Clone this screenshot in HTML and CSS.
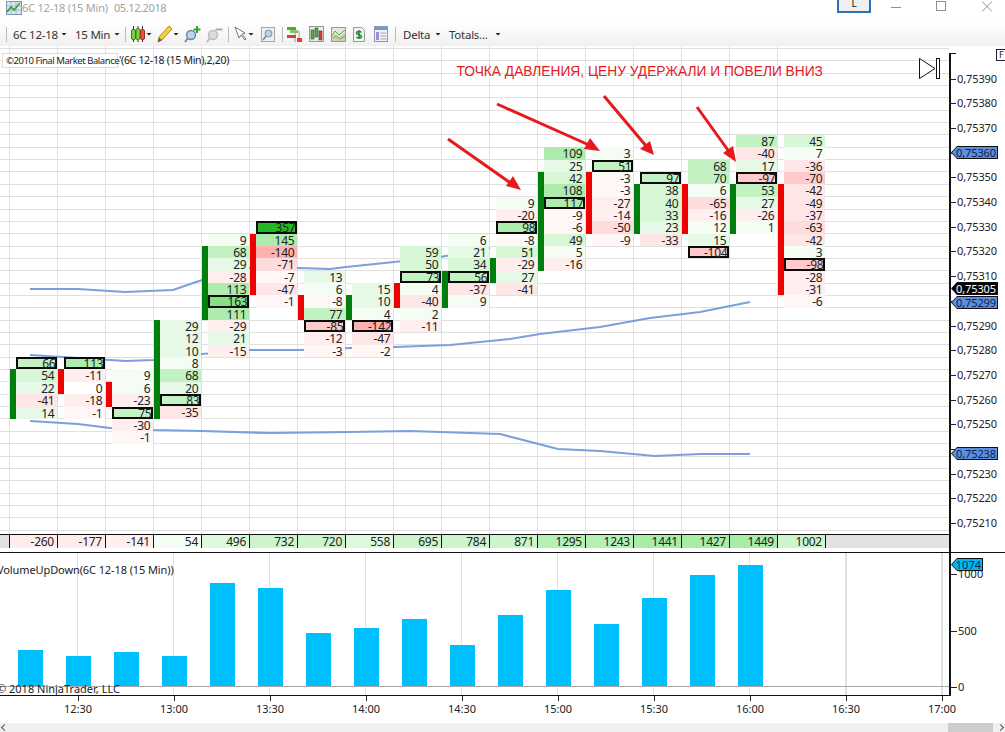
FILE: index.html
```html
<!DOCTYPE html>
<html lang="ru">
<head>
<meta charset="utf-8">
<title>6C 12-18 (15 Min)</title>
<link rel="stylesheet" href="styles.css">
</head>
<body>
<div class="app">
  <header class="titlebar">
    <svg class="app-icon" width="16" height="14" viewBox="0 0 16 14"><rect x=".5" y=".5" width="15" height="13" fill="#dce6f2" stroke="#7f93ad"/><path d="M1 5h14M1 9h14M5 1v12M10 1v12" stroke="#a9bad0"/><path d="M1 11l4-5 3 3 6-7" fill="none" stroke="#2e9e3e" stroke-width="1.6"/></svg>
    <span class="title-text">6C 12-18 (15 Min)</span>
    <span class="title-date">05.12.2018</span>
    <span class="link-btn">L</span>
    <svg class="win win-min" width="10" height="12" viewBox="0 0 10 12"><path d="M0 7.5h10" stroke="#8f8f8f"/></svg>
    <svg class="win win-max" width="10" height="12" viewBox="0 0 10 12"><rect x=".5" y="1.5" width="9" height="9" fill="none" stroke="#8f8f8f"/></svg>
    <svg class="win win-close" width="10" height="12" viewBox="0 0 10 12"><path d="M0 1.5l10 10M10 1.5l-10 10" stroke="#8f8f8f"/></svg>
  </header>

  <nav class="toolbar">
    <i class="sep"></i>
    <span class="tb-text w44 ml6">6C 12-18</span><i class="caret ml4"></i>
    <span class="tb-text w34 ml8">15 Min</span><i class="caret ml5"></i>
    <i class="sep ml5"></i>
    <svg class="ml5" width="14" height="18" viewBox="0 0 14 18"><path d="M2.500 1v16M7 1v16M11.500 1v16" stroke="#333"/><rect x=".5" y="4.500" width="4" height="10" rx="1.500" fill="#7fd23a" stroke="#2f7a1c"/><rect x="5" y="3.500" width="4" height="11" rx="1.500" fill="#7fd23a" stroke="#2f7a1c"/><rect x="9.500" y="4.500" width="4" height="10" rx="1.500" fill="#e8533e" stroke="#99301f"/></svg>
    <i class="caret ml1"></i>
    <svg class="ml5" width="16" height="18" viewBox="0 0 16 18"><path d="M1 17l1-5L12 1l3 3L5 15z" fill="#f4cf3f" stroke="#b38a1c"/><path d="M1 17l1-4 3 2z" fill="#555"/></svg>
    <i class="caret"></i>
    <svg class="ml5" width="17" height="18" viewBox="0 0 17 18"><circle cx="7" cy="10" r="4.500" fill="#b9d3ea" stroke="#5f88ad" stroke-width="1.400"/><path d="M4 13l-3 4" stroke="#888" stroke-width="2"/><path d="M13 1v7M9.500 4.500h7" stroke="#2fa52f" stroke-width="2"/></svg>
    <svg class="ml5" width="17" height="18" viewBox="0 0 17 18"><circle cx="7" cy="10" r="4.500" fill="#dcdcdc" stroke="#bdbdbd" stroke-width="1.400"/><path d="M4 13l-3 4" stroke="#bbb" stroke-width="2"/><path d="M9.500 4.500h7" stroke="#aaa" stroke-width="2"/></svg>
    <i class="sep ml5"></i>
    <svg class="ml5" width="13" height="16" viewBox="0 0 13 16"><path d="M1 1l4 11 2-3 4 5 1-1-4-5 3-1z" fill="#fff" stroke="#777"/></svg>
    <i class="caret ml1"></i>
    <svg class="ml7" width="14" height="15" viewBox="0 0 14 15"><rect x=".5" y=".5" width="13" height="14" fill="#efefef" stroke="#a8a8a8"/><circle cx="7.500" cy="6.500" r="3.500" fill="#b9d3ea" stroke="#6b93b6"/><path d="M5 9l-3 4" stroke="#888" stroke-width="1.500"/></svg>
    <i class="sep ml7"></i>
    <svg class="ml4" width="15" height="16" viewBox="0 0 15 16"><path d="M8 1v15M12 5v11" stroke="#9a9a9a"/><rect x="0" y="1" width="9" height="3" fill="#4fae3a"/><rect x="3" y="4" width="8" height="3" fill="#7fc46a"/><rect x="0" y="9" width="9" height="3" fill="#d8432e"/><rect x="10" y="12" width="5" height="4" fill="#d8432e"/></svg>
    <svg class="ml7" width="15" height="16" viewBox="0 0 15 16"><rect x=".5" y=".5" width="14" height="15" fill="#e9e9e9" stroke="#9a9a9a"/><rect x="2" y="4" width="3" height="9" fill="#54b03a" stroke="#333" stroke-width=".5"/><rect x="6" y="2" width="3" height="9" fill="#54b03a" stroke="#333" stroke-width=".5"/><rect x="10" y="5" width="3" height="9" fill="#d8432e" stroke="#333" stroke-width=".5"/></svg>
    <svg class="ml7" width="15" height="15" viewBox="0 0 15 15"><rect x=".5" y=".5" width="14" height="14" fill="#e3e8e3" stroke="#9a9a9a"/><path d="M1 14l3-7 4 3 6-4v8z" fill="#b9d8b0"/><path d="M1 9l3-5 4 4 6-5" fill="none" stroke="#4fae3a"/><path d="M1 11l4-2 4 3 5-3" fill="none" stroke="#d8736a"/></svg>
    <svg class="ml7" width="12" height="15" viewBox="0 0 12 15"><path d="M.5.5h8l3 3v11H.5z" fill="#f6f6f6" stroke="#999"/><path d="M8.500 5.500C7.500 4 3.500 4 3.500 6s5 1.500 5 3.500-4 2-5 .5M6 3v9" fill="none" stroke="#1f8a2f" stroke-width="1.500"/></svg>
    <svg class="ml9" width="14" height="16" viewBox="0 0 14 16"><rect x=".5" y=".5" width="13" height="15" fill="#eef2f8" stroke="#8a9ab0"/><rect x="1" y="1" width="12" height="3" fill="#6f9bd1"/><rect x="2" y="6" width="3" height="8" fill="#a78bd8"/><path d="M6.500 7h6M6.500 10h6M6.500 13h6" stroke="#9aa8ba"/></svg>
    <i class="sep ml7"></i>
    <span class="tb-text w25 ml7">Delta</span><i class="caret ml7"></i>
    <span class="tb-text w38 ml8">Totals...</span><i class="caret ml8"></i>
  </nav>

  <section class="main">
    <div class="plot">
      <div class="chart">
        <div class="hgrid"></div>
        <div class="vgrid"></div>
        <svg class="layer" viewBox="0 46 949 488" width="949" height="488">
          <g fill="none" stroke="#7aa0dd" stroke-width="2.200">
            <path d="M30 289L78 289 125 292 173 290 202 280 215 273 250 268 298 268 330 269 346 267 394 262 440 257 490 248"/>
            <path d="M30 355L78 358 126 361 154 360 202 354 250 350 300 350 350 348 394 347 450 345 510 339 540 334 600 327 650 318 700 312 750 302"/>
            <path d="M30 421L78 424 110 428 154 430 202 431 270 433 350 432 410 431 500 434 558 449 600 451 655 456 700 454 750 454"/>
          </g>
        </svg>
        <div class="cols">
          <div class="col" style="--r:25"><i class="bar up" style="--a:1;--n:4"></i><b class="g4 box">66</b><b class="g3">54</b><b class="g2">22</b><b class="r3">-41</b><b class="g2">14</b></div>
          <div class="col" style="--r:25"><i class="bar dn" style="--a:1;--n:2"></i><b class="g5 box">113</b><b class="r2">-11</b><b>0</b><b class="r2">-18</b><b class="r1">-1</b></div>
          <div class="col" style="--r:26"><i class="bar dn" style="--a:1;--n:2"></i><b class="g1">9</b><b class="g1">6</b><b class="r2">-23</b><b class="g4 box">75</b><b class="r2">-30</b><b class="r1">-1</b></div>
          <div class="col" style="--r:22"><i class="bar up" style="--a:0;--n:8"></i><b class="g2">29</b><b class="g2">12</b><b class="g2">10</b><b class="g1">8</b><b class="g4">68</b><b class="g2">20</b><b class="g4 box">83</b><b class="r3">-35</b></div>
          <div class="col" style="--r:15"><i class="bar up" style="--a:1;--n:6"></i><b class="g1">9</b><b class="g4">68</b><b class="g2">29</b><b class="r2">-28</b><b class="g5">113</b><b class="g6 box">163</b><b class="g5">111</b><b class="r2">-29</b><b class="g2">21</b><b class="r2">-15</b></div>
          <div class="col" style="--r:14"><i class="bar dn" style="--a:1;--n:5"></i><b class="g7 box">357</b><b class="g5">145</b><b class="r6">-140</b><b class="r4">-71</b><b class="r1">-7</b><b class="r3">-47</b><b class="r1">-1</b></div>
          <div class="col" style="--r:18"><i class="bar dn" style="--a:2;--n:2"></i><b class="g2">13</b><b class="g1">6</b><b class="r1">-8</b><b class="g4">77</b><b class="r5 box">-85</b><b class="r2">-12</b><b class="r1">-3</b></div>
          <div class="col" style="--r:19"><i class="bar up" style="--a:1;--n:2"></i><b class="g2">15</b><b class="g2">10</b><b class="g1">4</b><b class="r6 box">-142</b><b class="r3">-47</b><b class="r1">-2</b></div>
          <div class="col" style="--r:16"><i class="bar dn" style="--a:3;--n:2"></i><b class="g3">59</b><b class="g3">50</b><b class="g4 box">73</b><b class="g1">4</b><b class="r3">-40</b><b class="g1">2</b><b class="r2">-11</b></div>
          <div class="col" style="--r:15"><i class="bar up" style="--a:3;--n:3"></i><b class="g1">6</b><b class="g2">21</b><b class="g3">34</b><b class="g4 box">56</b><b class="r3">-37</b><b class="g1">9</b></div>
          <div class="col" style="--r:12"><i class="bar up" style="--a:5;--n:2"></i><b class="g1">9</b><b class="r2">-20</b><b class="g5 box">98</b><b class="r1">-8</b><b class="g3">51</b><b class="r2">-29</b><b class="g2">27</b><b class="r3">-41</b></div>
          <div class="col" style="--r:8"><i class="bar up" style="--a:2;--n:8"></i><b class="g5">109</b><b class="g2">25</b><b class="g3">42</b><b class="g5">108</b><b class="g5 box">117</b><b class="r1">-9</b><b class="r1">-6</b><b class="g3">49</b><b class="g1">5</b><b class="r2">-16</b></div>
          <div class="col" style="--r:8"><i class="bar dn" style="--a:2;--n:5"></i><b class="g1">3</b><b class="g4 box">51</b><b class="r1">-3</b><b class="r1">-3</b><b class="r2">-27</b><b class="r2">-14</b><b class="r4">-50</b><b class="r1">-9</b></div>
          <div class="col" style="--r:10"><i class="bar up" style="--a:1;--n:4"></i><b class="g4 box">97</b><b class="g3">38</b><b class="g3">40</b><b class="g3">33</b><b class="g2">23</b><b class="r3">-33</b></div>
          <div class="col" style="--r:9"><i class="bar dn" style="--a:2;--n:4"></i><b class="g4">68</b><b class="g4">70</b><b class="g1">6</b><b class="r4">-65</b><b class="r2">-16</b><b class="g1">12</b><b class="g2">15</b><b class="r5 box">-104</b></div>
          <div class="col" style="--r:7"><i class="bar up" style="--a:4;--n:4"></i><b class="g4">87</b><b class="r3">-40</b><b class="g2">17</b><b class="r5 box">-97</b><b class="g4">53</b><b class="g2">27</b><b class="r2">-26</b><b class="g1">1</b></div>
          <div class="col" style="--r:7"><i class="bar dn" style="--a:4;--n:9"></i><b class="g3">45</b><b class="g1">7</b><b class="r3">-36</b><b class="r5">-70</b><b class="r3">-42</b><b class="r3">-49</b><b class="r3">-37</b><b class="r4">-63</b><b class="r3">-42</b><b class="g1">3</b><b class="r5 box">-98</b><b class="r2">-28</b><b class="r2">-31</b><b class="r1">-6</b></div>
        </div>
        <svg class="layer" viewBox="0 46 949 488" width="949" height="488">
          <g stroke="#e8191c" stroke-width="3" fill="#e8191c">
            <path d="M448 139L512 184"/>
            <path d="M497 104L589 145"/>
            <path d="M604 96L647 147"/>
            <path d="M697 107L730 153"/>
          </g>
          <g fill="#e8191c">
            <path d="M521 190L506 186 513 176z"/>
            <path d="M600 151L584 149 590 138z"/>
            <path d="M654 155L640 149 650 141z"/>
            <path d="M736 162L723 153 733 146z"/>
          </g>
          <path d="M919.500 58.500L935 68.500 919.500 78.500z" fill="#fff" stroke="#111"/>
          <rect x="936.500" y="58.500" width="3" height="20" fill="#fff" stroke="#111"/>
        </svg>
        <div class="legend"><span class="legend-box">©2010 Final Market Balance</span><span class="legend-text">'(6C 12-18 (15 Min),2,20)</span></div>
        <p class="note">ТОЧКА ДАВЛЕНИЯ, ЦЕНУ УДЕРЖАЛИ И ПОВЕЛИ ВНИЗ</p>
      </div>
      <div class="totals">
        <span class="tot-lead"></span>
        <span class="t-r2">-260</span><span class="t-r2">-177</span><span class="t-r1">-141</span><span class="t-g0">54</span><span class="t-g1">496</span><span class="t-g2">732</span><span class="t-g2">720</span><span class="t-g1">558</span><span class="t-g2">695</span><span class="t-g2">784</span><span class="t-g2">871</span><span class="t-g3">1295</span><span class="t-g3">1243</span><span class="t-g4">1441</span><span class="t-g4">1427</span><span class="t-g4">1449</span><span class="t-g2">1002</span>
      </div>
    </div>
    <aside class="axis">
      <span class="corner-box">F</span>
      <div class="ticks">
        <span>0,75390</span><span>0,75380</span><span>0,75370</span><span></span><span>0,75350</span><span>0,75340</span><span>0,75330</span><span>0,75320</span><span>0,75310</span><span></span><span>0,75290</span><span>0,75280</span><span>0,75270</span><span>0,75260</span><span>0,75250</span><span></span><span>0,75230</span><span>0,75220</span><span>0,75210</span>
      </div>
      <span class="tag blue tag-360"><em>0,75360</em></span>
      <span class="tag black tag-305"><em>0,75305</em></span>
      <span class="tag blue tag-299"><em>0,75299</em></span>
      <span class="tag blue tag-238"><em>0,75238</em></span>
    </aside>
  </section>

  <section class="volume">
    <div class="vol-plot">
      <div class="bars">
        <i style="height:36px"></i><i style="height:30px"></i><i style="height:34px"></i><i style="height:30px"></i><i style="height:103px"></i><i style="height:98px"></i><i style="height:53px"></i><i style="height:58px"></i><i style="height:67px"></i><i style="height:41px"></i><i style="height:71px"></i><i style="height:96px"></i><i style="height:62px"></i><i style="height:88px"></i><i style="height:111px"></i><i style="height:121px"></i>
      </div>
      <span class="vol-label">VolumeUpDown(6C 12-18 (15 Min))</span>
      <span class="copyright">© 2018 NinjaTrader, LLC</span>
    </div>
    <aside class="vol-axis">
      <span>1000</span><span>500</span><span>0</span>
      <span class="tag cyan tag-1074"><em>1074</em></span>
    </aside>
  </section>

  <footer class="times">
    <span>12:30</span><span>13:00</span><span>13:30</span><span>14:00</span><span>14:30</span><span>15:00</span><span>15:30</span><span>16:00</span><span>16:30</span><span>17:00</span>
  </footer>

  <div class="scrollbar"><i class="scroll-left"></i><i class="thumb"></i><i class="scroll-arrow"></i></div>
</div>
</body>
</html>
```
FILE: styles.css
```css
* { box-sizing: border-box; }
html, body { margin: 0; padding: 0; background: #fff; }
body { font-family: "Noto Sans", "Open Sans", sans-serif; color: #222; overflow: hidden; }
.app { width: 1005px; height: 732px; overflow: hidden; display: flex; flex-direction: column; }

/* title bar */
.titlebar { height: 22px; flex: none; display: flex; align-items: flex-start; position: relative; font-size: 11px; line-height: 16px; color: #a2a2a2; }
.app-icon { margin: 1px 0 0 6px; flex: none; }
.title-text { margin-left: 0; letter-spacing: -.2px; }
.title-date { margin-left: 6px; letter-spacing: -.4px; }
.link-btn { position: absolute; left: 837px; top: -4px; width: 34px; height: 17px; border: 2px solid #2a72b5; background: #efefef; color: #111; font-size: 10px; line-height: 11px; text-align: center; }
.win { position: absolute; top: 0; }
.win-min { left: 891px; }
.win-max { left: 936px; }
.win-close { left: 982px; }

/* toolbar */
.toolbar { height: 24px; flex: none; display: flex; align-items: center; padding-left: 6px; background: linear-gradient(#fff, #f0f0f0); font-size: 11.500px; color: #333; }
.toolbar svg { flex: none; }
.sep { width: 1px; height: 15px; background: #bcbcbc; flex: none; }
.tb-text { white-space: nowrap; letter-spacing: -.25px; flex: none; }
.w25 { width: 25px; }
.w34 { width: 34px; }
.w38 { width: 38px; }
.w44 { width: 44px; }
.caret { width: 6px; height: 3px; flex: none; background: #222; clip-path: polygon(0 0, 100% 0, 50% 100%); }
.ml1 { margin-left: 1px; }
.ml4 { margin-left: 4px; }
.ml5 { margin-left: 5px; }
.ml6 { margin-left: 6px; }
.ml7 { margin-left: 7px; }
.ml8 { margin-left: 8px; }
.ml9 { margin-left: 9px; }

/* price pane */
.main { height: 507px; flex: none; display: flex; border-bottom: 1px solid #111; }
.plot { width: 949px; flex: none; display: flex; flex-direction: column; }
.chart { flex: 1; position: relative; overflow: hidden; }
.hgrid { position: absolute; left: 0; right: 0; top: 2px; bottom: 0; background: repeating-linear-gradient(to bottom, #e0e0e0 0 1px, #fff 1px 12.35px); }
.vgrid { position: absolute; left: 9px; top: 0; bottom: 0; width: 769px; background: repeating-linear-gradient(to right, #e0e0e0 0 1px, transparent 1px 48px); }
.layer { position: absolute; left: 0; top: 0; }
.cols { position: relative; display: flex; align-items: flex-start; padding: 2.4px 0 0 10px; font-size: 12px; color: #222; letter-spacing: -.25px; }
.col { width: 48px; flex: none; position: relative; padding-left: 6px; margin-top: calc(var(--r) * 12.35px); }
.col b { display: block; width: 41.4px; height: 12.35px; line-height: 14px; font-weight: 400; text-align: right; padding-right: 3px; background: #fff; position: relative; }
.col b.box { box-shadow: inset 0 0 0 2px #0a0a0a; padding-right: 2px; }
.bar { position: absolute; left: 0; width: 6px; top: calc(var(--a) * 12.35px); height: calc(var(--n) * 12.35px); }
.bar.up { background: #007f0e; }
.bar.dn { background: #f00000; }
.col .g1 { background: #f4fcf4; }
.col .g2 { background: #e6f9e6; }
.col .g3 { background: #d6f6d6; }
.col .g4 { background: #c2f1c2; }
.col .g5 { background: #aeecae; }
.col .g6 { background: #84e184; }
.col .g7 { background: #22b922; }
.col .r1 { background: #fff6f6; }
.col .r2 { background: #ffeeee; }
.col .r3 { background: #ffe6e6; }
.col .r4 { background: #ffdcdc; }
.col .r5 { background: #ffcaca; }
.col .r6 { background: #ffb0b0; }

.legend { position: absolute; left: 2px; top: 7px; display: flex; align-items: center; font-size: 10.500px; line-height: 13px; white-space: nowrap; color: #222; }
.legend-box { background: #fff; border: 1px solid #ddd; padding: 0 0 0 3px; height: 15px; font-size: 9.500px; letter-spacing: -.45px; display: flex; align-items: center; width: 116px; flex: none; }
.legend-text { margin-left: 1px; letter-spacing: -.3px; }
.note { position: absolute; left: 456.500px; top: 18px; margin: 0; font: 400 13.750px/16px "Liberation Sans", sans-serif; color: #e0201f; white-space: nowrap; }

.totals { height: 18px; flex: none; display: flex; font-size: 12px; line-height: 14px; border-top: 1px solid #111; background: linear-gradient(#e2e2e2 0 13px, #fff 13px); letter-spacing: -.25px; }
.totals span { width: 48px; height: 13px; flex: none; text-align: right; padding-right: 3px; border-right: 1px solid #111; }
.totals .tot-lead { width: 10px; padding: 0; }
.totals .t-r1 { background: #fff0f0; }
.totals .t-r2 { background: #ffecec; }
.totals .t-g0 { background: #f4fcf4; }
.totals .t-g1 { background: #dcf9dc; }
.totals .t-g2 { background: #cdf5cd; }
.totals .t-g3 { background: #b4efb4; }
.totals .t-g4 { background: #a7eca7; }

/* axis */
.axis { flex: 1; position: relative; font-size: 11px; color: #222; letter-spacing: -.1px; }
.axis::before { content: ""; position: absolute; left: 0; top: 7px; bottom: 0; width: 2px; background: #111; }
.axis::after { content: ""; position: absolute; left: 0; top: 7px; width: 7px; height: 1px; background: #111; }
.ticks { display: flex; flex-direction: column; padding-top: 20.650px; }
.ticks span { height: 24.700px; line-height: 24.700px; padding-left: 8px; position: relative; white-space: nowrap; }
.ticks span::before { content: ""; position: absolute; left: 0; top: 12px; width: 7px; height: 1px; background: #222; }
.corner-box { position: absolute; left: 47px; top: 3px; width: 12px; height: 12px; border: 1px solid #222; font-size: 9px; line-height: 10px; padding-left: 2px; background: #fff; }
.tag { position: absolute; left: 2px; width: 47px; height: 13px; background: #111; clip-path: polygon(0 50%, 6px 0, 100% 0, 100% 100%, 6px 100%); font-size: 11px; line-height: 13px; text-align: right; padding-right: 2px; }
.tag::before { content: ""; position: absolute; inset: 1px; clip-path: polygon(0 50%, 5px 0, 100% 0, 100% 100%, 5px 100%); }
.tag em { position: relative; font-style: normal; }
.tag.blue::before { background: #5b8ee0; }
.tag.blue { color: #10204a; }
.tag.black::before { background: #050505; }
.tag.black { color: #fff; }
.tag.cyan::before { background: #00b4f5; }
.tag.cyan { color: #072a44; width: 32px; }
.tag-360 { top: 100px; }
.tag-305 { top: 236px; }
.tag-299 { top: 250px; }
.tag-238 { top: 401px; }
.tag-1074 { top: 5px; }

/* volume pane */
.volume { height: 143px; flex: none; display: flex; }
.vol-plot { width: 949px; flex: none; position: relative; border-bottom: 1px solid #111; padding-bottom: 8px; display: flex; flex-direction: column; justify-content: flex-end; background: repeating-linear-gradient(to right, transparent 0 77.500px, #e0e0e0 77.500px 78.500px, transparent 78.500px 96px); }
.bars { display: flex; align-items: flex-end; gap: 23px; padding-left: 18px; border-bottom: 1px solid #a8a8a8; }
.bars i { width: 25px; flex: none; background: #00bfff; }
.vol-label { position: absolute; left: -3px; top: 10px; font-size: 11px; line-height: 14px; letter-spacing: -.1px; color: #222; white-space: nowrap; }
.copyright { position: absolute; left: -3px; top: 129px; font-size: 11px; line-height: 14px; color: #222; white-space: nowrap; }
.vol-axis { flex: 1; position: relative; display: flex; flex-direction: column; padding-top: 14px; font-size: 11px; line-height: 14px; color: #222; border-left: 2px solid #111; }
.vol-axis > span:not(.tag) { height: 56.500px; flex: none; padding-left: 7px; position: relative; }
.vol-axis > span:not(.tag)::before { content: ""; position: absolute; left: 0; top: 7px; width: 6px; height: 1px; background: #222; }
.vol-axis .tag { left: 0; }

/* time axis */
.times { height: 27px; flex: none; display: flex; padding: 6px 0 0 30px; font-size: 11px; line-height: 14px; color: #222; }
.times span { width: 96px; flex: none; text-align: center; position: relative; }
.times span::before { content: ""; position: absolute; left: 48px; top: -6px; width: 1px; height: 5px; background: #222; }

/* scrollbar */
.scrollbar { flex: 1; background: #f0f0f0; position: relative; }
.thumb { position: absolute; left: 948px; top: 0; bottom: 0; width: 45px; background: #cdcdcd; }
.scroll-arrow { position: absolute; left: 998px; top: 2px; width: 5px; height: 5px; border-top: 1px solid #555; border-right: 1px solid #555; transform: rotate(45deg); }
.scroll-left { position: absolute; left: 2px; top: 2px; width: 5px; height: 5px; border-bottom: 1px solid #555; border-left: 1px solid #555; transform: rotate(45deg); }
```
